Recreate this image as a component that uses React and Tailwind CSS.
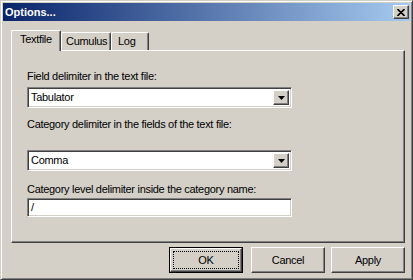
const raised =
  "border border-t-white border-l-white border-r-[#404040] border-b-[#404040] shadow-[inset_-1px_-1px_0_#808080,inset_1px_1px_0_#d4d0c8] bg-[#d4d0c8]";
const sunken =
  "border border-t-[#808080] border-l-[#808080] border-r-white border-b-white shadow-[inset_1px_1px_0_#404040,inset_-1px_-1px_0_#d4d0c8] bg-white";

function Combo({ value }) {
  return (
    <div className={`w-[265px] h-[21px] flex p-[2px] ${sunken}`}>
      <div className="flex-1 flex items-center pl-[1px] leading-[13px]">{value}</div>
      <div className={`w-[16px] h-full flex items-center justify-center ${raised}`}>
        <svg width="7" height="4" viewBox="0 0 7 4">
          <path d="M0 0H7L3.5 4Z" fill="#000" />
        </svg>
      </div>
    </div>
  );
}

function Tab({ label, active, width, pad }) {
  return (
    <div
      className={`flex rounded-t-[2px] border border-b-0 border-t-white border-l-white border-r-[#404040] shadow-[inset_-1px_0_0_#808080] bg-[#d4d0c8] ${
        active ? "relative z-10 h-[21px] -mb-px pt-[2px]" : "h-[18px] pt-[2px]"
      }`}
      style={{ width, paddingLeft: pad }}
    >
      <span className="leading-[13px]">{label}</span>
    </div>
  );
}

function Button({ label, isDefault, className = "" }) {
  if (isDefault) {
    return (
      <div className={`w-[74px] h-[26px] border border-black ${className}`}>
        <div className={`w-full h-full p-[2px] ${raised}`}>
          <div className="w-full h-full border border-dotted border-black flex items-center justify-center leading-[13px]">
            {label}
          </div>
        </div>
      </div>
    );
  }
  return (
    <div className={`w-[74px] h-[26px] flex items-center justify-center leading-[13px] ${raised} ${className}`}>
      {label}
    </div>
  );
}

export default function App() {
  return (
    <div
      className="w-[413px] h-[280px] flex flex-col p-[2px] bg-[#d4d0c8] border border-t-[#d4d0c8] border-l-[#d4d0c8] border-r-[#404040] border-b-[#404040] shadow-[inset_1px_1px_0_#fff,inset_-1px_-1px_0_#808080] text-[11px] tracking-[-0.3px] text-black"
      style={{ fontFamily: '"Liberation Sans", Arial, sans-serif' }}
    >
      {/* Title bar */}
      <div className="h-[18px] flex items-center justify-between pl-[2px] pr-[1px] bg-[linear-gradient(to_right,#0a246a,#a6caf0)]">
        <span className="text-white font-bold tracking-normal leading-[13px]">Options...</span>
        <div className={`w-[16px] h-[14px] flex items-center justify-center ${raised}`}>
          <svg width="8" height="7" viewBox="0 0 8 7">
            <path d="M0.5 0L4 3.5L7.5 0M0.5 7L4 3.5L7.5 7" stroke="#000" strokeWidth="1.6" fill="none" />
          </svg>
        </div>
      </div>

      {/* Tabs */}
      <div className="mt-[9px] pl-[8px] flex items-end">
        <Tab label="Textfile" active width={50} pad={8} />
        <Tab label="Cumulus" width={50} pad={4} />
        <Tab label="Log" width={38} pad={6} />
      </div>

      {/* Panel */}
      <div className="ml-[8px] w-[394px] h-[193px] flex flex-col pl-[15px] pt-[19px] border border-t-white border-l-white border-r-[#404040] border-b-[#404040] shadow-[inset_-1px_-1px_0_#808080]">
        <div className="leading-[13px]">Field delimiter in the text file:</div>
        <div className="mt-[4px]">
          <Combo value="Tabulator" />
        </div>
        <div className="mt-[10px] leading-[13px]">Category delimiter in the fields of the text file:</div>
        <div className="mt-[19px]">
          <Combo value="Comma" />
        </div>
        <div className="mt-[12px] leading-[13px]">Category level delimiter inside the category name:</div>
        <div className={`mt-[2px] w-[265px] h-[19px] flex items-center pl-[3px] ${sunken}`}>
          <span className="leading-[13px]">/</span>
        </div>
      </div>

      {/* Buttons */}
      <div className="mt-[4px] flex pl-[166px]">
        <Button label="OK" isDefault />
        <Button label="Cancel" className="ml-[8px]" />
        <Button label="Apply" className="ml-[6px]" />
      </div>
    </div>
  );
}
